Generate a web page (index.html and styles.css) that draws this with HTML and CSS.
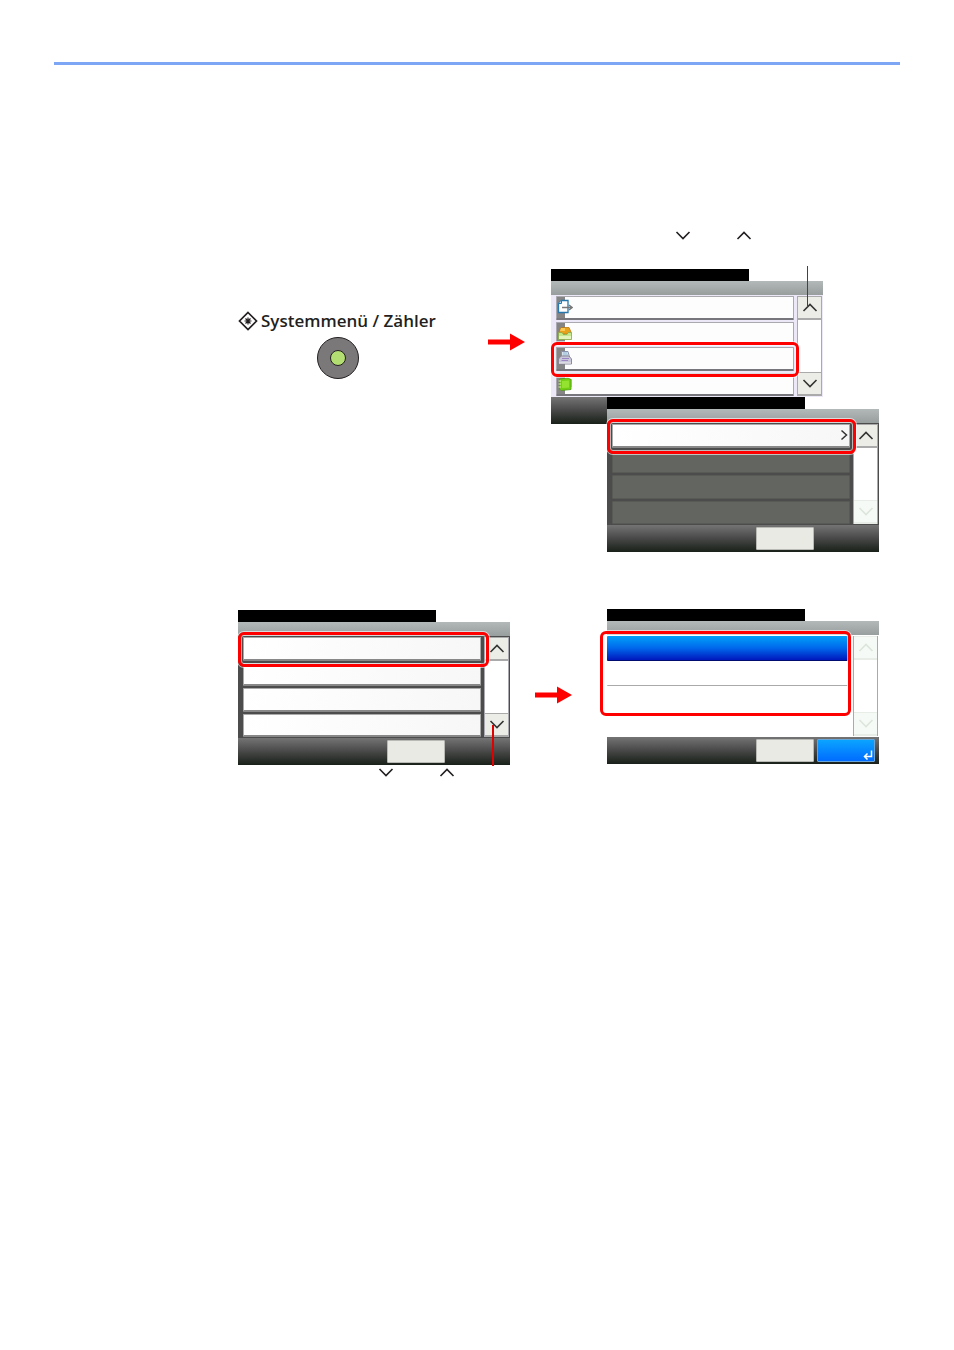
FILE: index.html
```html
<!DOCTYPE html>
<html lang="de">
<head>
<meta charset="utf-8">
<title>Systemmenü / Zähler</title>
<link rel="stylesheet" href="styles.css">
</head>
<body>
<svg class="defs" aria-hidden="true">
  <symbol id="up" viewBox="0 0 16 9"><path d="M1.5 8 8 1.5 14.500 8" fill="none" stroke="currentColor" stroke-width="1.600"/></symbol>
  <symbol id="down" viewBox="0 0 16 9"><path d="M1.500 1 8 7.500 14.500 1" fill="none" stroke="currentColor" stroke-width="1.600"/></symbol>
  <symbol id="arrow" viewBox="0 0 37 18"><path d="M0 6.500H22V0.500L37 9 22 17.500V11.500H0Z" fill="#f00"/></symbol>
</svg>
<main class="page">
  <hr class="rule">

  <section class="step step-open">
    <div class="key">
      <div class="key-label">
        <svg class="key-icon" viewBox="0 0 20 20" aria-hidden="true"><path d="M10 1.500 18.500 10 10 18.500 1.500 10Z" fill="none" stroke="#231f20" stroke-width="1.700"/><path d="M10 6.500V13.500M6.500 10H13.500M7.500 7.500 12.500 12.500M12.500 7.500 7.500 12.500" stroke="#231f20" stroke-width="1.200"/></svg>
        <span id="key-name">Systemmenü / Zähler</span>
      </div>
      <button class="key-button" aria-labelledby="key-name"><span class="key-light"></span></button>
    </div>
    <svg class="arrow"><use href="#arrow"/></svg>
    <div class="stack">
      <div class="hints hints-top"><svg class="chevron"><use href="#down"/></svg><svg class="chevron"><use href="#up"/></svg></div>

      <div class="screen menu">
        <div class="title"></div>
        <div class="bar"></div>
        <div class="body">
          <div class="list">
            <button class="row" aria-label="1"><span class="tab"></span><svg class="icon" viewBox="0 0 16 16"><path d="M4.500 1.500H11V13.500H1.500V4.500Z" fill="#fff" stroke="#2878ad" stroke-width="1.300"/><path d="M4.500 1.500V4.500H1.500" fill="#b9dcf2" stroke="#2878ad"/><path d="M5 8.500H15M12 6 15 8.500 12 11" fill="none" stroke="#777" stroke-width="1.500"/></svg></button>
            <button class="row" aria-label="2"><span class="tab"></span><svg class="icon" viewBox="0 0 16 16"><path d="M2 7 4 2.500H12L14 7V9H2Z" fill="#e9a11b" stroke="#b97912" stroke-width=".8"/><path d="M4 3H8V6H3Z" fill="#f8ca55"/><path d="M1.500 7.500H5L6.500 9.500H10L11 7.500H14.500V14.500H1.500Z" fill="#c6e68a" stroke="#87a947" stroke-width=".8"/><path d="M2 11H14V14H2Z" fill="#e3f4bd"/></svg></button>
            <button class="row" aria-label="3"><span class="tab"></span><svg class="icon" viewBox="0 0 16 16"><path d="M4.500 6V1.500H11L12.500 7" fill="#f4f7fb" stroke="#8791ad"/><path d="M5.500 3H10.500M5.500 5H11" stroke="#75a5c9"/><path d="M1.500 9 4 6H12L14.500 9V14H1.500Z" fill="#c9c7da" stroke="#858292" stroke-width=".9"/><path d="M5 8.500H12M4.500 10.500H11" stroke="#9c86c2" stroke-width="1.200"/><path d="M2 13H14" stroke="#eee"/></svg></button>
            <button class="row" aria-label="4"><span class="tab"></span><svg class="icon" viewBox="0 0 16 16"><path d="M12 3H15V11H12Z" fill="#e5da6a"/><path d="M2.500 3 11 2 14 3.500V13.500L4 14.500 2.500 13Z" fill="#73cf13" stroke="#4e9d13" stroke-width=".8"/><path d="M5 5 12 4.500V11.500L5 12Z" fill="#95e331"/><path d="M1.500 5H4M1.500 8H4M1.500 11H4" stroke="#d6f4a2"/></svg></button>
          </div>
          <div class="scroll">
            <button class="scroll-button" aria-label="Auf"><svg class="chevron"><use href="#up"/></svg></button>
            <button class="scroll-button" aria-label="Ab"><svg class="chevron"><use href="#down"/></svg></button>
          </div>
        </div>
        <div class="footer"></div>
        <span class="mark mark-third"></span>
        <span class="leader leader-top"></span>
      </div>

      <div class="screen dark front">
        <div class="title"></div>
        <div class="bar"></div>
        <div class="body">
          <div class="list">
            <button class="row row-next" aria-label="1"><svg class="next" viewBox="0 0 8 12"><path d="M1.500 1.500 6.500 6 1.500 10.500" fill="none" stroke="#333" stroke-width="1.500"/></svg></button>
            <button class="row" disabled aria-label="2"></button>
            <button class="row" disabled aria-label="3"></button>
            <button class="row" disabled aria-label="4"></button>
          </div>
          <div class="scroll">
            <button class="scroll-button" aria-label="Auf"><svg class="chevron"><use href="#up"/></svg></button>
            <button class="scroll-button" disabled aria-label="Ab"><svg class="chevron"><use href="#down"/></svg></button>
          </div>
        </div>
        <div class="footer"><button class="action" aria-label="Zurück"></button></div>
        <span class="mark mark-first"></span>
      </div>
    </div>
  </section>

  <section class="step step-select">
    <div class="column">
      <div class="screen dark">
        <div class="title"></div>
        <div class="bar"></div>
        <div class="body">
          <div class="list">
            <button class="row" aria-label="1"></button>
            <button class="row" aria-label="2"></button>
            <button class="row" aria-label="3"></button>
            <button class="row" aria-label="4"></button>
          </div>
          <div class="scroll">
            <button class="scroll-button" aria-label="Auf"><svg class="chevron"><use href="#up"/></svg></button>
            <button class="scroll-button" aria-label="Ab"><svg class="chevron"><use href="#down"/></svg></button>
          </div>
        </div>
        <div class="footer"><button class="action" aria-label="Zurück"></button></div>
        <span class="mark mark-first mark-wide"></span>
        <span class="leader leader-bottom"></span>
      </div>
      <div class="hints hints-bottom"><svg class="chevron"><use href="#down"/></svg><svg class="chevron"><use href="#up"/></svg></div>
    </div>
    <svg class="arrow arrow-select"><use href="#arrow"/></svg>
    <div class="screen choice">
      <div class="title"></div>
      <div class="bar"></div>
      <div class="body">
        <div class="list">
          <button class="row selected" aria-label="1"></button>
          <button class="row" aria-label="2"></button>
          <button class="row" aria-label="3"></button>
          <button class="row" aria-label="4"></button>
        </div>
        <div class="scroll">
          <button class="scroll-button" disabled aria-label="Auf"><svg class="chevron"><use href="#up"/></svg></button>
          <button class="scroll-button" disabled aria-label="Ab"><svg class="chevron"><use href="#down"/></svg></button>
        </div>
      </div>
      <div class="footer"><button class="action" aria-label="Abbrechen"></button><button class="action confirm" aria-label="OK"><svg class="enter" viewBox="0 0 10 10"><path d="M8.500 0.500V6.500H2M4.500 3.500 1.500 6.500 4.500 9.500" fill="none" stroke="#fff" stroke-width="1.500"/></svg></button></div>
      <span class="mark mark-choices"></span>
    </div>
  </section>
</main>
</body>
</html>
```

FILE: styles.css
```css
* { box-sizing: border-box; }
body { margin: 0; background: #fff; font-family: "Open Sans", "Noto Sans", sans-serif; color: #231f20; }
button { display: block; margin: 0; padding: 0; border: 0; font: inherit; color: inherit; }
svg { display: block; flex: none; }
.defs { position: absolute; width: 0; height: 0; }
.page { padding: 62px 54px; }
.rule { height: 3px; margin: 0; border: 0; background: #7da7f5; }
.step { display: flex; align-items: flex-start; padding-left: 184px; }
.step-open { padding-top: 166px; }
.step-select { padding-top: 57px; }
.column { padding-top: 1px; }

.key { width: 250px; padding-top: 77px; }
.key-label { display: flex; align-items: center; gap: 3px; height: 26px; font-size: 17px; line-height: 26px; font-weight: 600; white-space: nowrap; }
.key-icon { width: 20px; height: 20px; }
.key-button { display: grid; place-items: center; width: 42px; height: 42px; margin: 3px 0 0 79px; border: 1px solid #231f20; border-radius: 50%; background: #7b7879; }
.key-light { width: 16px; height: 16px; border: 1px solid #231f20; border-radius: 50%; background: #b2de72; }
.arrow { width: 37px; height: 18px; margin: 102px 26px 0 0; }
.arrow-select { margin: 77px 35px 0 25px; }

.hints { display: flex; gap: 45px; }
.hints-top { padding: 0 0 29px 124px; }
.hints-bottom { padding: 3px 0 0 140px; }
.chevron { width: 16px; height: 9px; }

.screen { position: relative; width: 272px; }
.title { width: 198px; height: 12px; background: #000; }
.bar { height: 14px; background: linear-gradient(#b3b9b8, #989e9e); }
.body { display: flex; gap: 3px; height: 102px; padding: 1px 1px 1px 5px; background: #ece8f8; }
.list { display: grid; flex: 1; grid-template-rows: repeat(4, 1fr); gap: 2px; }
.row { position: relative; display: flex; align-items: center; background: #fdfdfd; border: 1px solid #aaa9b0; border-bottom: 2px solid #77767c; border-radius: 1px; }
.tab { align-self: stretch; width: 8px; background: #858585; }
.icon { width: 16px; height: 16px; margin-left: -8px; }
.scroll { display: flex; flex-direction: column; justify-content: space-between; width: 25px; background: #fff; border: 1px solid #aaa9b0; border-width: 0 1px; }
.scroll-button { display: grid; place-items: center; height: 24px; background: #ecede6; border: 1px solid #aaa; border-width: 1px 0 2px; color: #333; }
.scroll-button:disabled { background: #f6faf6; border-color: #e8ede8; color: #dce5dc; }
.footer { display: flex; gap: 3px; height: 27px; padding: 2px 3px 2px 149px; background: linear-gradient(#747474, #474847 50%, #192019); }
.menu .footer { width: 56px; padding: 0; }
.action { width: 58px; background: #e9eae4; border: 1px solid #b9bab5; border-radius: 1px; }
.confirm { display: flex; align-items: flex-end; justify-content: flex-end; padding: 1px; background: linear-gradient(#0ba4ff, #006bff); border-color: #6aa5d8; }
.enter { width: 10px; height: 10px; }

.front { margin: -27px 0 0 56px; }
.dark .body { background: #4c4c4c; }
.dark .row { border-color: #aaa; border-bottom-color: #888; background: linear-gradient(100deg, #fff, #f7f7f7); }
.dark .row:disabled { background: #636660; border: 1px solid #585a56; }
.row-next { justify-content: flex-end; }
.next { width: 8px; height: 12px; margin-right: 1px; }

.choice .body { padding: 1px 1px 1px 0; gap: 5px; background: #fff; }
.choice .list { gap: 0; }
.choice .row { border: 0; background: #fff; }
.choice .row:nth-child(2) { border-bottom: 1px solid #aaa; }
.choice .row.selected { background: linear-gradient(#00a0fa, #0068ec 50%, #0018bd); border-bottom: 1px solid #000c70; }

.mark { position: absolute; border: 3px solid #f00; border-radius: 6px; box-shadow: 0 0 0 1px #fff9, inset 0 0 0 1px #fff9; }
.mark-third { top: 73px; left: 0; width: 248px; height: 35px; }
.mark-first { top: 22px; left: 0; width: 249px; height: 35px; }
.mark-wide { width: 251px; }
.mark-choices { top: 22px; left: -7px; width: 251px; height: 85px; }
.leader { position: absolute; background: #e00000; }
.leader-top { top: -3px; left: 256px; width: 1px; height: 41px; }
.leader-bottom { top: 115px; left: 254px; width: 2px; height: 41px; }
```
